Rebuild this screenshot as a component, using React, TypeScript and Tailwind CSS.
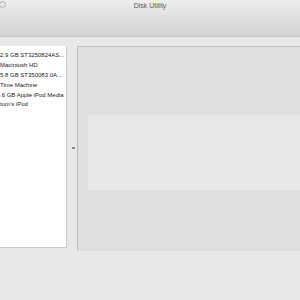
export default function App() {
  const rows = [
    "2.9 GB ST3250824AS...",
    "Macintosh HD",
    "5.8 GB ST350083 0A...",
    "Time Machine",
    ".6 GB Apple iPod Media",
    "tom's iPod",
  ];

  return (
    <div
      className="w-[300px] h-[300px] overflow-hidden bg-[#e8e8e8] flex flex-col"
      style={{ fontFamily: '"Liberation Sans", Arial, sans-serif' }}
    >
      {/* Title bar / toolbar */}
      <div className="relative h-[37px] shrink-0 bg-gradient-to-b from-[#eeeeee] to-[#d2d2d2] border-b border-[#c4c4c4]">
        <div className="absolute left-[-1px] top-[1px] w-[7px] h-[7px] rounded-full border border-[#b5b5b5] bg-[#e6e6e6]" />
        <div className="text-center text-[7px] leading-[10px] text-[#5a5a5a] pt-[1px]">Disk Utility</div>
      </div>

      {/* Content */}
      <div className="flex pt-[9px]">
        {/* Sidebar */}
        <div className="w-[67px] h-[202px] shrink-0 bg-white border-r border-b border-[#cdcdcd] pt-[5px] overflow-hidden">
          {rows.map((r) => (
            <div
              key={r}
              className="h-[9.9px] text-[6px] leading-[9.9px] text-[#1a1a1a] whitespace-nowrap"
            >
              {r}
            </div>
          ))}
        </div>

        {/* Splitter */}
        <div className="w-[10px] shrink-0 flex items-center h-[202px]">
          <div className="ml-[5px] mt-[2px] w-[3px] h-[2px] bg-[#8a8a8a]" />
        </div>

        {/* Main panel */}
        <div className="flex-1 h-[205px] bg-[#dfdfdf] border-t border-l border-[#bdbdbd] pt-[68px] pl-[10px]">
          <div className="h-[75px] bg-[#e7e7e7]" />
        </div>
      </div>
    </div>
  );
}
